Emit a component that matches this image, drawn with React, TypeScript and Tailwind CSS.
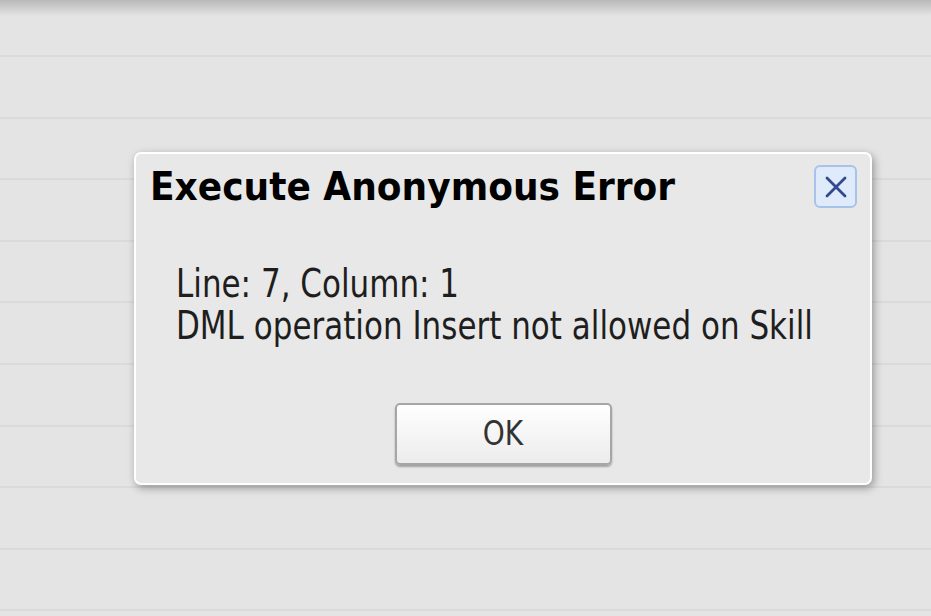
export default function App() {
  const lines = Array.from({ length: 10 });

  return (
    <div className="relative w-[931px] h-[616px] overflow-hidden bg-[#e4e4e4]" style={{ fontFamily: '"DejaVu Sans", Verdana, sans-serif' }}>
      {/* striped page behind the dialog */}
      <div className="absolute inset-x-0 top-0 h-[16px] bg-gradient-to-b from-[#b9b9b9] to-[#e4e4e4]" />
      <div className="flex flex-col pt-[55px]">
        {lines.map((_, i) => (
          <div key={i} className="h-[61.6px] shrink-0 border-t-2 border-[#dadada]" />
        ))}
      </div>

      {/* modal */}
      <div className="absolute left-[134px] top-[152px] w-[738px] h-[333px] rounded-[7px] border-2 border-white bg-[#e8e8e8] shadow-[2px_3px_9px_rgba(0,0,0,0.35)]">
        <div className="flex items-start justify-between pl-[14px] pr-[13px] pt-[10px]">
          <h1 className="inline-block origin-top scale-y-[1.1] text-[36px] leading-[42px] font-bold text-black">
            Execute Anonymous Error
          </h1>
          <button className="mt-[1px] flex h-[43px] w-[43px] items-center justify-center rounded-[6px] border-2 border-[#a8c3ea] bg-[#dfeafb]">
            <svg width="24" height="24" viewBox="0 0 24 24" fill="none" stroke="#34488f" strokeWidth="2.8" strokeLinecap="round">
              <path d="M3 3 L21 21 M21 3 L3 21" />
            </svg>
          </button>
        </div>

        <div className="pl-[40px] pt-[49px] text-[31px] leading-[42px] text-[#1e1e1e]">
          <p className="origin-top scale-y-[1.25]">Line: 7, Column: 1</p>
          <p className="origin-top scale-y-[1.25]">DML operation Insert not allowed on Skill</p>
        </div>

        <div className="flex justify-center pt-[62px]">
          <button className="h-[62px] w-[217px] rounded-[5px] border-2 border-[#a6a6a6] bg-gradient-to-b from-white to-[#ececec] text-[28px] text-[#333] shadow-[0_2px_2px_rgba(0,0,0,0.3)]">
            <span className="inline-block scale-y-[1.2]">OK</span>
          </button>
        </div>
      </div>
    </div>
  );
}
